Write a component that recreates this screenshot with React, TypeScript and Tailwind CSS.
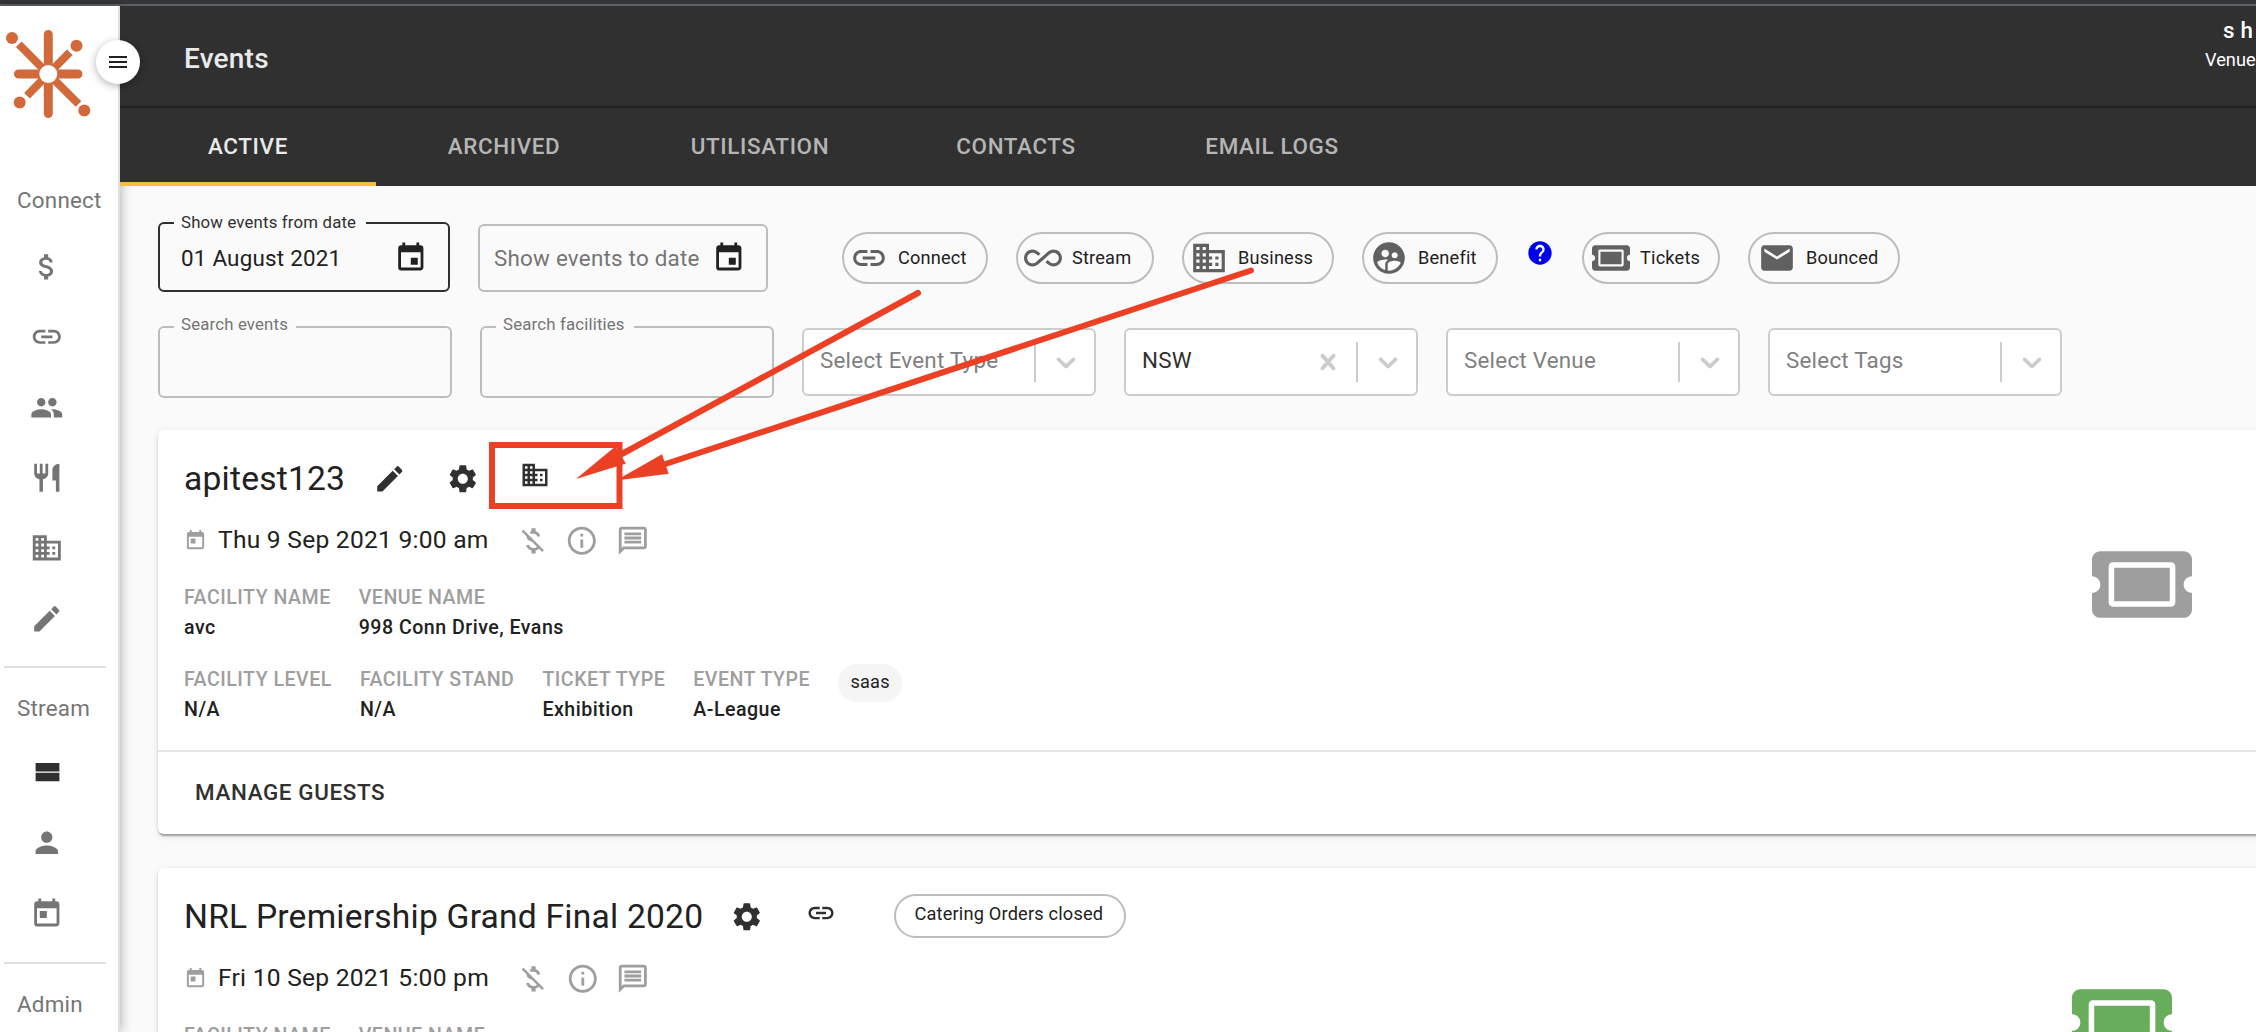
import React, { ReactNode } from "react";
import {
  MdAttachMoney,
  MdLink,
  MdPeople,
  MdRestaurant,
  MdDomain,
  MdEdit,
  MdPerson,
  MdToday,
  MdEvent,
  MdMenu,
  MdAllInclusive,
  MdSupervisedUserCircle,
  MdEmail,
  MdHelp,
  MdSettings,
  MdMoneyOff,
  MdInfoOutline,
  MdOutlineMessage,
} from "react-icons/md";
import { FaTicketAlt } from "react-icons/fa";

const ViewStreamIcon = ({ className }: { className?: string }) => (
  <svg viewBox="0 0 24 24" fill="currentColor" className={className}>
    <path d="M4 18h17v-6H4v6zM4 5v6h17V5H4z" />
  </svg>
);

const Logo = () => (
  <svg viewBox="0 6 118 124" className="h-[124px] w-[118px] shrink-0">
    <g stroke="#d2693a" fill="none">
      <path d="M48.3 34.5V113.5M18.5 74H78" strokeLinecap="round" strokeWidth="9" />
      <path d="M18.8 44.3L48.3 74L69.8 52.3M27 95.8L48.3 74L78.5 104" strokeWidth="8" />
    </g>
    <g fill="#d2693a">
      <circle cx="12" cy="38" r="6" />
      <circle cx="76.5" cy="45.7" r="6" />
      <circle cx="19.7" cy="102.5" r="6" />
      <circle cx="84.3" cy="110.5" r="6" />
    </g>
    <circle cx="48.3" cy="74" r="9" fill="#fff" />
  </svg>
);

const NavItem = ({ children }: { children: ReactNode }) => (
  <a className="flex h-[70.4px] w-[94px] items-center justify-center text-[33.6px] text-[#757575]">
    {children}
  </a>
);

const NavTitle = ({ children }: { children: ReactNode }) => (
  <div className="pl-[17px] text-[22.4px] leading-[32px] tracking-[0.01em] text-[#757575]">
    {children}
  </div>
);

const Sidebar = () => (
  <aside className="relative z-10 flex w-[120px] shrink-0 flex-col border-r-2 border-[#e0e0e0] bg-white shadow-[2px_0_10px_rgba(0,0,0,0.25)]">
    <Logo />
    <nav className="pt-[54px]">
      <NavTitle>Connect</NavTitle>
      <div className="pt-[15.4px]">
        <NavItem><MdAttachMoney /></NavItem>
        <NavItem><MdLink /></NavItem>
        <NavItem><MdPeople /></NavItem>
        <NavItem><MdRestaurant /></NavItem>
        <NavItem><MdDomain /></NavItem>
        <NavItem><MdEdit /></NavItem>
      </div>
      <hr className="mt-[12px] mb-[24.4px] ml-1 w-[102px] border-t-2 border-[#e0e0e0]" />
      <NavTitle>Stream</NavTitle>
      <div className="pt-[13.4px]">
        <NavItem>
          <ViewStreamIcon className="size-[33.6px] text-[#303030]" />
        </NavItem>
        <NavItem><MdPerson /></NavItem>
        <NavItem><MdToday /></NavItem>
      </div>
      <hr className="mt-[13px] mb-[24.4px] ml-1 w-[102px] border-t-2 border-[#e0e0e0]" />
      <NavTitle>Admin</NavTitle>
    </nav>
  </aside>
);

const tabs = ["ACTIVE", "ARCHIVED", "UTILISATION", "CONTACTS", "EMAIL LOGS"];

const Header = () => (
  <header className="relative z-20 bg-[#303030] text-white">
    <div className="flex h-[102px] justify-between border-b-2 border-[#212121]">
      <h1 className="pt-[33px] pl-[64px] text-[28px] leading-[40px] font-medium tracking-[0.0075em] text-[#eaeaea]">
        Events
      </h1>
      <div className="w-[51px] shrink-0 pt-[8px] whitespace-nowrap">
        <div className="pl-[18px] text-[22.4px] leading-[32px] font-medium tracking-[0.01em]">s h</div>
        <div className="pt-[2px] text-[18.2px] leading-[24px]">Venue</div>
      </div>
    </div>
    <div className="flex h-[78px]">
      {tabs.map((tab, i) => (
        <button
          key={tab}
          className={
            i === 0
              ? "w-[256px] border-b-4 border-[#f5bf42] pt-[4px] text-[22.4px] font-medium tracking-[0.0286em] text-[#eaeaea]"
              : "w-[256px] border-b-4 border-transparent pt-[4px] text-[22.4px] font-medium tracking-[0.0286em] text-[#b5b5b5]"
          }
        >
          {tab}
        </button>
      ))}
    </div>
  </header>
);

const FieldLabel = ({ children, className }: { children: ReactNode; className: string }) => (
  <label
    className={`absolute left-[14px] bg-[#fafafa] pl-[7px] text-[16.8px] leading-[24px] tracking-[0.01em] whitespace-nowrap ${className}`}
  >
    {children}
  </label>
);

const FilterChip = ({ icon, label, className }: { icon: ReactNode; label: string; className: string }) => (
  <button
    className={`flex h-[52px] shrink-0 items-center rounded-full border-2 border-[#bdbdbd] text-[#616161] ${className}`}
  >
    {icon}
    <span className="ml-[10px] text-[18.2px] tracking-[0.01em] text-[#212121]">{label}</span>
  </button>
);

const Chevron = () => (
  <svg viewBox="0 0 20 20" fill="#ccc" className="size-[32px]">
    <path d="M4.516 7.548c0.436-0.446 1.043-0.481 1.576 0l3.908 3.747 3.908-3.747c0.533-0.481 1.141-0.446 1.574 0 0.436 0.445 0.408 1.197 0 1.615-0.406 0.418-4.695 4.502-4.695 4.502-0.217 0.223-0.502 0.335-0.787 0.335s-0.57-0.112-0.789-0.335c0 0-4.287-4.084-4.695-4.502s-0.436-1.17 0-1.615z" />
  </svg>
);

const Cross = () => (
  <svg viewBox="0 0 20 20" fill="#ccc" className="mr-[12px] size-[32px]">
    <path d="M14.348 14.849c-0.469 0.469-1.229 0.469-1.697 0l-2.651-3.030-2.651 3.029c-0.469 0.469-1.229 0.469-1.697 0-0.469-0.469-0.469-1.229 0-1.697l2.758-3.15-2.759-3.152c-0.469-0.469-0.469-1.228 0-1.697s1.228-0.469 1.697 0l2.652 3.031 2.651-3.031c0.469-0.469 1.228-0.469 1.697 0s0.469 1.229 0 1.697l-2.758 3.152 2.758 3.15c0.469 0.469 0.469 1.229 0 1.698z" />
  </svg>
);

const Select = ({ placeholder, value }: { placeholder?: string; value?: string }) => (
  <div className="mt-[2px] flex h-[68px] w-[294px] items-center rounded-[6px] border-2 border-[#ccc] bg-white text-[22.4px] tracking-[0.01em]">
    <span className={value ? "flex-1 pl-[16px] pb-[2px] text-[#303030]" : "flex-1 pl-[16px] pb-[2px] whitespace-nowrap text-[#808080]"}>
      {value || placeholder}
    </span>
    {value && <Cross />}
    <span className="h-[40px] w-[2px] bg-[#ccc]" />
    <span className="flex w-[58px] justify-center pl-[1px]">
      <Chevron />
    </span>
  </div>
);

const Filters = () => (
  <section className="pt-[36px] pl-[38px]">
    <div className="flex h-[70px] items-start">
      <div className="relative flex h-[70px] w-[292px] items-center rounded-[6px] border-2 border-[#303030] pr-[20px] pl-[21px]">
        <FieldLabel className="-top-[14px] w-[192px] text-[#303030]">Show events from date</FieldLabel>
        <span className="flex-1 pt-[4px] text-[22.4px] tracking-[0.01em] text-[#212121]">01 August 2021</span>
        <MdEvent className="mt-[2px] text-[33.6px] text-[#212121]" />
      </div>
      <div className="mt-[2px] ml-[28px] flex h-[68px] w-[290px] items-center rounded-[6px] border-2 border-[#bdbdbd] pr-[20px] pl-[14px]">
        <span className="flex-1 pt-[2px] text-[22.4px] tracking-[0.01em] whitespace-nowrap text-[#757575]">Show events to date</span>
        <MdEvent className="shrink-0 text-[33.6px] text-[#212121]" />
      </div>
      <div className="mt-[10px] ml-[74px] flex">
        <FilterChip className="mr-[28px] w-[146px] pl-[6px]" icon={<MdLink className="size-[38px]" />} label="Connect" />
        <FilterChip className="mr-[28px] w-[138px] pl-[6px]" icon={<MdAllInclusive className="size-[38px]" />} label="Stream" />
        <FilterChip className="mr-[28px] w-[152px] pl-[6px]" icon={<MdDomain className="size-[38px]" />} label="Business" />
        <FilterChip className="w-[136px] pl-[6px]" icon={<MdSupervisedUserCircle className="size-[38px]" />} label="Benefit" />
        <MdHelp className="mx-[28px] mt-[7px] size-[28px] text-[#0000ee]" />
        <FilterChip className="mr-[28px] w-[138px] pl-[8px]" icon={<FaTicketAlt className="h-[34px] w-[38px]" />} label="Tickets" />
        <FilterChip className="w-[152px] pl-[8px]" icon={<MdEmail className="size-[38px]" />} label="Bounced" />
      </div>
    </div>
    <div className="mt-[34px] flex h-[72px] gap-[28px]">
      <div className="relative h-[72px] w-[294px] rounded-[6px] border-2 border-[#bdbdbd]">
        <FieldLabel className="-top-[16px] w-[122px] text-[#757575]">Search events</FieldLabel>
      </div>
      <div className="relative h-[72px] w-[294px] rounded-[6px] border-2 border-[#bdbdbd]">
        <FieldLabel className="-top-[16px] w-[138px] text-[#757575]">Search facilities</FieldLabel>
      </div>
      <Select placeholder="Select Event Type" />
      <Select value="NSW" />
      <Select placeholder="Select Venue" />
      <Select placeholder="Select Tags" />
    </div>
  </section>
);

const Info = ({ label, value }: { label: string; value: string }) => (
  <div className="text-[19.6px] leading-[30px] font-medium tracking-[0.025em]">
    <div className="text-[#9e9e9e]">{label}</div>
    <div className="text-[#212121]">{value}</div>
  </div>
);

interface EventCardProps {
  title: string;
  date: string;
  actions: ReactNode;
  ticketClass: string;
}

const EventCard = ({ title, date, actions, ticketClass }: EventCardProps) => (
  <article className="-mr-[12px] rounded-[6px] bg-white shadow-[0_4px_2px_-2px_rgba(0,0,0,0.2),0_2px_2px_rgba(0,0,0,0.14),0_2px_6px_rgba(0,0,0,0.12)]">
    <div className="flex h-[322px] justify-between border-b-2 border-[#e6e6e6] pt-[25px] pl-[26px]">
      <div>
        <div className="flex h-[48px] items-center">
          <h2 className="text-[33.6px] tracking-[0.0065em] whitespace-nowrap text-[#212121]">{title}</h2>
          {actions}
        </div>
        <div className="mt-[19px] flex h-[36px] items-center text-[#9e9e9e]">
          <MdToday className="size-[23px]" />
          <span className="ml-[11px] text-[24.6px] tracking-[0.01em] text-[#212121]">{date}</span>
          <MdMoneyOff className="mt-[2px] ml-[27px] size-[33.6px]" />
          <MdInfoOutline className="mt-[2px] ml-[16px] size-[33.6px]" />
          <MdOutlineMessage className="mt-[2px] ml-[17px] size-[33.6px]" />
        </div>
        <div className="mt-[25px] flex gap-[28px]">
          <Info label="FACILITY NAME" value="avc" />
          <Info label="VENUE NAME" value="998 Conn Drive, Evans" />
        </div>
        <div className="mt-[22px] flex gap-[28px]">
          <Info label="FACILITY LEVEL" value="N/A" />
          <Info label="FACILITY STAND" value="N/A" />
          <Info label="TICKET TYPE" value="Exhibition" />
          <Info label="EVENT TYPE" value="A-League" />
          <span className="mt-[-1px] flex h-[38px] w-[64px] items-center justify-center rounded-full bg-[#f5f5f5] pb-[3px] text-[18.2px] tracking-[0.01em] text-[#212121]">
            saas
          </span>
        </div>
      </div>
      <FaTicketAlt className={`mt-[85px] h-[89px] w-[100px] ${ticketClass}`} />
    </div>
    <div className="flex h-[82px] items-center pl-[37px]">
      <button className="text-[22.4px] font-medium tracking-[0.0286em] text-[#303030]">MANAGE GUESTS</button>
    </div>
  </article>
);

// Red marker and arrows drawn over the page
const Annotations = () => (
  <svg viewBox="0 0 2256 1032" className="pointer-events-none absolute top-0 left-0 z-40 h-[1032px] w-[2256px]">
    <g stroke="#ec4025" strokeWidth="6" fill="none">
      <rect x="492" y="445" width="127.5" height="61" />
      <path d="M918 293L620 455M1251 270.5L664 464.5" strokeLinecap="round" />
    </g>
    <path d="M576 479L615 446.7L626 463.5ZM616 480.5L662 454.3L668.7 473.7Z" fill="#ec4025" />
  </svg>
);

export default function App() {
  return (
    <div className="relative flex h-[1032px] w-full flex-col overflow-hidden bg-[#fafafa] font-[Roboto,sans-serif]">
      <div className="h-[6px] shrink-0 border-b-2 border-[#5f6165] bg-[#35363a]" />
      <div className="flex min-h-0 flex-1">
        <Sidebar />
        <button className="absolute top-[40px] left-[96px] z-30 flex size-[44px] items-center justify-center rounded-full bg-white text-[24px] text-[#212121] shadow-[0_2px_8px_rgba(0,0,0,0.3)]">
          <MdMenu />
        </button>
        <main className="min-w-0 flex-1">
          <Header />
          <Filters />
          <div className="mt-[32px] flex flex-col gap-[34px] pl-[38px]">
            <EventCard
              title="apitest123"
              date="Thu 9 Sep 2021 9:00 am"
              ticketClass="mr-[76px] text-[#9e9e9e]"
              actions={
                <div className="flex items-center text-[#303030]">
                  <MdEdit className="ml-[28px] size-[33.6px]" />
                  <MdSettings className="ml-[39px] size-[33.6px]" />
                  <MdDomain className="mb-[8px] ml-[41px] size-[30px]" />
                </div>
              }
            />
            <EventCard
              title="NRL Premiership Grand Final 2020"
              date="Fri 10 Sep 2021 5:00 pm"
              ticketClass="mr-[96px] text-[#67ad5b]"
              actions={
                <div className="flex items-center text-[#303030]">
                  <MdSettings className="mb-[1px] ml-[27px] size-[33.6px]" />
                  <MdLink className="mb-[8px] ml-[42px] size-[30px]" />
                  <span className="mb-[2px] ml-[58px] flex h-[44px] w-[232px] items-center justify-center rounded-full border-2 border-[#bdbdbd] pr-[2px] pb-[4px] text-[18.2px] tracking-[0.01em] text-[#212121]">
                    Catering Orders closed
                  </span>
                </div>
              }
            />
          </div>
        </main>
      </div>
      <Annotations />
    </div>
  );
}
